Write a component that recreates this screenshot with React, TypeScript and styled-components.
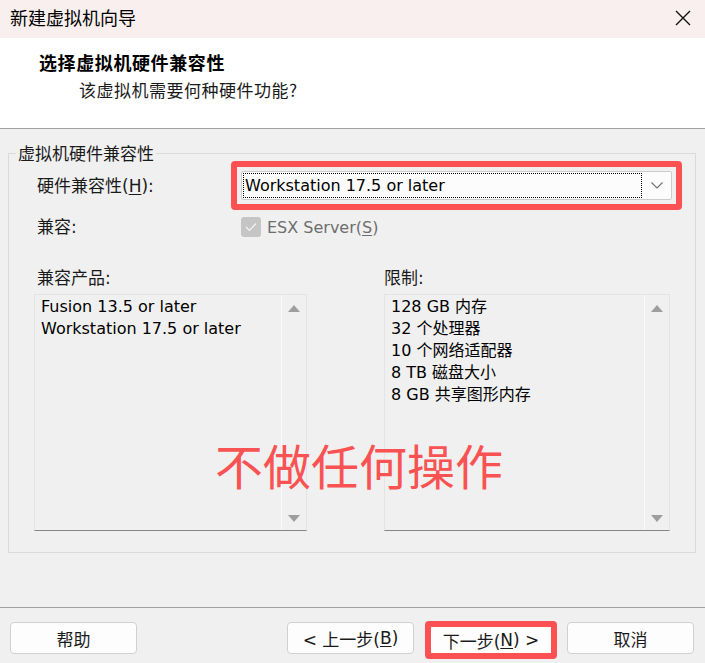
import React from "react";
import styled, { createGlobalStyle } from "styled-components";

const FONT = `"DejaVu Sans", "Noto Sans CJK SC", sans-serif`;
const CJK = `"Noto Sans CJK SC", sans-serif`;
const RED = "#fb5152";

const Global = createGlobalStyle`
  html, body { margin: 0; padding: 0; background: #f0f0f0; }
  body { font-family: ${FONT}; color: #000; }
  * { box-sizing: border-box; }
`;

const Window = styled.div`
  position: relative;
  width: 705px;
  height: 663px;
  display: flex;
  flex-direction: column;
  background: #f0f0f0;
  overflow: hidden;
`;

const TitleBar = styled.div`
  height: 38px;
  flex: none;
  background: #f8efee;
  display: flex;
  align-items: center;
  justify-content: space-between;
  padding: 0 14px 4px 10px;
  font-family: ${CJK};
  font-size: 18px;
`;

const CloseBtn = styled.div`
  width: 16px;
  height: 16px;
  display: flex;
  margin-top: 2px;
`;

const Header = styled.div`
  height: 91px;
  flex: none;
  background: #fff;
  border-bottom: 1px solid #a0a0a0;
  padding: 12px 0 0 39px;
  font-family: ${CJK};
`;

const HeaderTitle = styled.div`
  font-size: 18px;
  font-weight: 700;
  line-height: 24px;
  letter-spacing: 0.6px;
`;

const HeaderSub = styled.div`
  font-size: 17px;
  line-height: 24px;
  margin: 4px 0 0 40px;
  letter-spacing: 0.5px;
  color: #1a1a1a;
`;

const Body = styled.div`
  flex: 1;
  padding: 16px 9px 0 8px;
`;

const Group = styled.fieldset`
  margin: 0;
  padding: 0 13px 21px 28px;
  border: 1px solid #dadada;
  min-width: 0;
`;

const Legend = styled.legend`
  margin-left: -21px;
  padding: 0 2px;
  font-size: 17px;
  line-height: 16px;
  font-family: ${CJK};
  color: #1a1a1a;
`;

const FormRow = styled.div<{ $top?: number }>`
  display: grid;
  grid-template-columns: 194px 1fr;
  align-items: center;
  margin-top: ${(p) => p.$top ?? 0}px;
`;

const Label = styled.div`
  font-size: 17px;
  line-height: 22px;
  color: #1a1a1a;
`;

const Annot = styled.div`
  border: 6px solid ${RED};
  border-radius: 4px;
  padding: 4px;
`;

const Select = styled.div`
  height: 29px;
  display: flex;
  background: #fcfcfc;
  border: 1px solid #cccccc;
  border-radius: 2px;
`;

const Focus = styled.div`
  flex: 1;
  margin: 1px 0 1px 1px;
  border: 1px dotted #000;
  display: flex;
  align-items: center;
  padding-left: 1px;
  font-size: 16px;
`;

const DropBtn = styled.div`
  width: 29px;
  display: flex;
  align-items: center;
  justify-content: center;
`;

const CheckWrap = styled.div`
  height: 30px;
  display: flex;
  align-items: center;
  padding-left: 10px;
  gap: 6px;
  color: #6e6e6e;
  font-size: 16px;
`;

const Box = styled.div`
  width: 20px;
  height: 20px;
  border-radius: 3px;
  background: #c5c5c5;
  display: flex;
  align-items: center;
  justify-content: center;
`;

const Lists = styled.div`
  display: grid;
  grid-template-columns: 273px 286px;
  column-gap: 77px;
  margin: 25px 0 0 -3px;
`;

const ListCol = styled.div<{ $indent?: number }>`
  display: flex;
  flex-direction: column;
  & > ${Label} {
    margin-left: ${(p) => p.$indent ?? 0}px;
    margin-bottom: 5px;
  }
`;

const ListBox = styled.div`
  height: 237px;
  display: flex;
  border: 1px solid #e4e4e4;
  border-bottom-color: #868686;
`;

const ListItems = styled.div`
  flex: 1;
  padding: 1px 6px;
  font-size: 16px;
  line-height: 22px;
`;

const ScrollBar = styled.div`
  width: 25px;
  border-left: 1px solid #fafafa;
  display: flex;
  flex-direction: column;
  justify-content: space-between;
  align-items: center;
  padding: 10px 0 8px;
`;

const Arrow = styled.div<{ $down?: boolean }>`
  width: 0;
  height: 0;
  border-left: 6px solid transparent;
  border-right: 6px solid transparent;
  ${(p) =>
    p.$down ? "border-top: 7px solid #9e9e9e;" : "border-bottom: 7px solid #9e9e9e;"}
`;

const Footer = styled.div`
  height: 56px;
  flex: none;
  border-top: 1px solid #a0a0a0;
  display: flex;
  align-items: flex-start;
  padding: 14px 11px 0 10px;
`;

const Button = styled.div<{ $push?: boolean }>`
  width: 127px;
  height: 32px;
  background: #fdfdfd;
  border: 1px solid #d0d0d0;
  border-radius: 4px;
  display: flex;
  align-items: center;
  justify-content: center;
  font-size: 17px;
  color: #1a1a1a;
  margin-left: ${(p) => (p.$push ? "auto" : "0")};
`;

const NextAnnot = styled.div`
  width: 132px;
  height: 38px;
  margin: -1px 10px 0 11px;
  border: 6px solid ${RED};
  border-radius: 4px;
  background: #fdfdfd;
  display: flex;
  align-items: center;
  justify-content: center;
  font-size: 17px;
  color: #1a1a1a;
`;

const Overlay = styled.div`
  position: absolute;
  left: 215px;
  top: 440px;
  font-family: ${CJK};
  font-size: 48px;
  line-height: 48px;
  color: #f95252;
  pointer-events: none;
`;

const U = styled.span`
  text-decoration: underline;
  text-underline-offset: 2px;
`;

export default function App() {
  return (
    <>
      <Global />
      <Window>
        <TitleBar>
          <span>新建虚拟机向导</span>
          <CloseBtn>
            <svg width="16" height="16" viewBox="0 0 16 16">
              <path d="M1 1 L15 15 M15 1 L1 15" stroke="#111" strokeWidth="1.4" fill="none" />
            </svg>
          </CloseBtn>
        </TitleBar>
        <Header>
          <HeaderTitle>选择虚拟机硬件兼容性</HeaderTitle>
          <HeaderSub>该虚拟机需要何种硬件功能?</HeaderSub>
        </Header>
        <Body>
          <Group>
            <Legend>虚拟机硬件兼容性</Legend>
            <FormRow>
              <Label>
                硬件兼容性(<U>H</U>):
              </Label>
              <Annot>
                <Select>
                  <Focus>Workstation 17.5 or later</Focus>
                  <DropBtn>
                    <svg width="12" height="7" viewBox="0 0 12 7">
                      <polyline points="0.5,0.5 6,6 11.5,0.5" stroke="#707070" strokeWidth="1.1" fill="none" />
                    </svg>
                  </DropBtn>
                </Select>
              </Annot>
            </FormRow>
            <FormRow $top={2}>
              <Label>兼容:</Label>
              <CheckWrap>
                <Box>
                  <svg width="12" height="10" viewBox="0 0 12 10">
                    <polyline points="1,5 4.5,8.5 11,1.5" stroke="#f4f4f4" strokeWidth="1.2" fill="none" />
                  </svg>
                </Box>
                <span>
                  ESX Server(<U>S</U>)
                </span>
              </CheckWrap>
            </FormRow>
            <Lists>
              <ListCol $indent={3}>
                <Label>兼容产品:</Label>
                <ListBox>
                  <ListItems>
                    <div>Fusion 13.5 or later</div>
                    <div>Workstation 17.5 or later</div>
                  </ListItems>
                  <ScrollBar>
                    <Arrow />
                    <Arrow $down />
                  </ScrollBar>
                </ListBox>
              </ListCol>
              <ListCol>
                <Label>限制:</Label>
                <ListBox>
                  <ListItems>
                    <div>128 GB 内存</div>
                    <div>32 个处理器</div>
                    <div>10 个网络适配器</div>
                    <div>8 TB 磁盘大小</div>
                    <div>8 GB 共享图形内存</div>
                  </ListItems>
                  <ScrollBar>
                    <Arrow />
                    <Arrow $down />
                  </ScrollBar>
                </ListBox>
              </ListCol>
            </Lists>
          </Group>
        </Body>
        <Footer>
          <Button>帮助</Button>
          <Button $push>
            &lt; 上一步(<U>B</U>)
          </Button>
          <NextAnnot>
            下一步(<U>N</U>) &gt;
          </NextAnnot>
          <Button>取消</Button>
        </Footer>
        <Overlay>不做任何操作</Overlay>
      </Window>
    </>
  );
}
